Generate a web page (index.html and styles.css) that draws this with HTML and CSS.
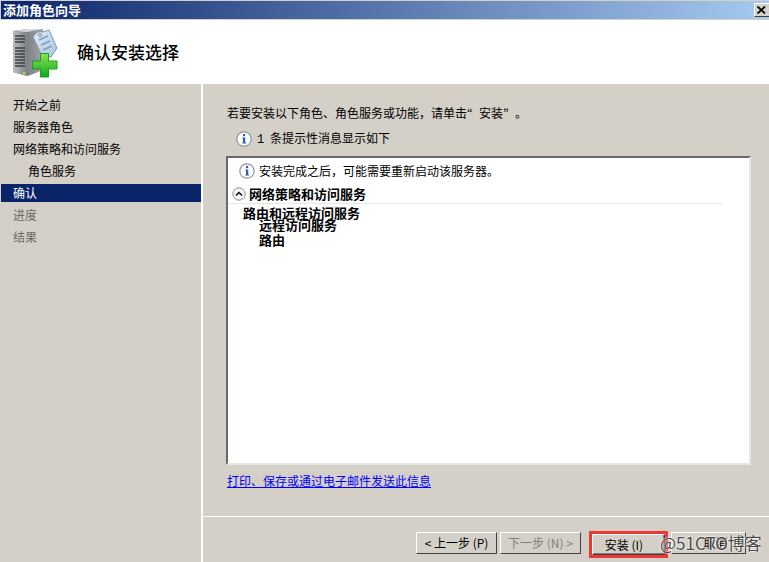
FILE: index.html
```html
<!DOCTYPE html>
<html lang="zh">
<head>
<meta charset="utf-8">
<title>添加角色向导</title>
<link rel="stylesheet" href="styles.css">
</head>
<body>
<div class="window">
  <div class="titlebar">
    <span class="title">添加角色向导</span>
    <span class="close"><svg width="9" height="8" viewBox="0 0 9 8"><path d="M0.5 0.5 L8 7.5 M8 0.5 L0.5 7.5" stroke="#000" stroke-width="1.8" fill="none"/></svg></span>
  </div>
  <header class="header">
    <svg class="logo" width="46" height="50" viewBox="0 0 46 50">
      <defs>
        <linearGradient id="srv" x1="0" x2="1" y1="0" y2="0"><stop offset="0" stop-color="#b9bec3"/><stop offset="1" stop-color="#7d8286"/></linearGradient>
        <linearGradient id="side" x1="0" x2="1" y1="0" y2="0"><stop offset="0" stop-color="#5e6266"/><stop offset="1" stop-color="#a2a5a8"/></linearGradient>
        <linearGradient id="tag" x1="0" x2="1" y1="0" y2="1"><stop offset="0" stop-color="#e3eef8"/><stop offset="1" stop-color="#a9c4e0"/></linearGradient>
        <linearGradient id="plus" x1="0" x2="0" y1="0" y2="1"><stop offset="0" stop-color="#8ae653"/><stop offset="1" stop-color="#12a61c"/></linearGradient>
      </defs>
      <path d="M0 3 L15 1 L30 1 L30 42 L15 48 L0 44 Z" fill="url(#side)"/>
      <path d="M0 3 L14 4 L14 48 L0 44 Z" fill="url(#srv)"/>
      <path d="M0 3 L15 1 L30 1 L14 4 Z" fill="#d6d9dc"/>
      <path d="M2 8 H12 M2 11 H12 M2 14 H12 M2 20 H12 M2 23 H12 M2 26 H12 M2 29 H12 M2 32 H12 M2 35 H12 M2 38 H12" stroke="#3e4246" stroke-width="1.3"/>
      <rect x="10" y="44" width="2.4" height="2.4" fill="#a6e23e"/>
      <path d="M20 9 Q24 2 30 4 L36 2 L44 20 L38 29 L29 28 Z" fill="url(#tag)" stroke="#7c98b6"/>
      <path d="M26 12 L35 8 M28 17 L37 13 M30 22 L39 18" stroke="#7e9cc0" stroke-width="1.4"/>
      <circle cx="27" cy="7" r="1.5" fill="#fff" stroke="#6a7f96"/>
      <path d="M27.5 25.5 H35.5 V33 H44 V41 H35.5 V49 H27.5 V41 H19.5 V33 H27.5 Z" fill="url(#plus)" stroke="#1f9a24"/>
    </svg>
    <h1 class="heading">确认安装选择</h1>
  </header>
  <div class="body">
    <nav class="nav">
      <div class="nav-item">开始之前</div>
      <div class="nav-item">服务器角色</div>
      <div class="nav-item">网络策略和访问服务</div>
      <div class="nav-item nav-sub">角色服务</div>
      <div class="nav-item nav-active">确认</div>
      <div class="nav-item nav-off">进度</div>
      <div class="nav-item nav-off">结果</div>
    </nav>
    <main class="main">
      <div class="content">
        <p class="intro">若要安装以下角色、角色服务或功能，请单击<span class="quote">“</span>安装<span class="quote">”</span>。</p>
        <div class="notice">
          <svg class="info" width="16" height="16" viewBox="0 0 16 16"><use href="#info-icon"/></svg>
          <span><span class="num">1</span> 条提示性消息显示如下</span>
        </div>
        <section class="panel">
          <div class="panel-msg">
            <svg class="info" width="16" height="16" viewBox="0 0 16 16">
              <g id="info-icon">
                <circle cx="8" cy="8" r="7.2" fill="#fff" stroke="#8d949c" stroke-width="1.2"/>
                <rect x="7" y="3" width="2.2" height="2.2" fill="#2b5fb4"/>
                <path d="M6.3 6.6 H9.2 V11.6 H10 V12.6 H6.3 V11.6 H7 V7.6 H6.3 Z" fill="#2b5fb4"/>
              </g>
            </svg>
            <span>安装完成之后，可能需要重新启动该服务器。</span>
          </div>
          <div class="group-head">
            <svg class="chev" width="14" height="14" viewBox="0 0 14 14"><circle cx="7" cy="7" r="6.2" fill="#f4f4f4" stroke="#8a8f94"/><path d="M4 8.5 L7 5.5 L10 8.5" stroke="#000" stroke-width="1.4" fill="none"/></svg>
            <span>网络策略和访问服务</span>
          </div>
          <div class="tree">
            <div class="tree-1">路由和远程访问服务</div>
            <div class="tree-2">远程访问服务</div>
            <div class="tree-3">路由</div>
          </div>
        </section>
        <a class="link" href="#">打印、保存或通过电子邮件发送此信息</a>
      </div>
      <footer class="footer">
        <button class="btn">&lt; 上一步 (P)</button>
        <button class="btn btn-off">下一步 (N) &gt;</button>
        <button class="btn btn-primary">安装 (I)</button>
        <button class="btn btn-cancel">取消</button>
      </footer>
    </main>
  </div>
</div>
<div class="watermark">@51CTO博客</div>
</body>
</html>
```
FILE: styles.css
```css
* { box-sizing: border-box; }
html, body { margin: 0; padding: 0; }
body {
  width: 769px;
  height: 562px;
  overflow: hidden;
  background: #d4d0c8;
  font-family: "Noto Sans CJK SC", "Liberation Sans", sans-serif;
  font-size: 12px;
  line-height: 16px;
  color: #000;
  position: relative;
}
.window { display: flex; flex-direction: column; height: 562px; padding-top: 1px; padding-left: 1px; }
.titlebar {
  height: 18px;
  flex: none;
  display: flex;
  align-items: center;
  justify-content: space-between;
  background: linear-gradient(to right, #0a246a, #a6caf0);
  color: #fff;
  font-size: 13px;
  font-weight: 700;
  padding-left: 2px;
}
.close {
  width: 16px;
  height: 14px;
  margin-right: -1px;
  padding-left: 2px;
  display: flex;
  align-items: center;
  background: #d4d0c8;
  border-top: 1px solid #fff;
  border-left: 1px solid #fff;
  border-bottom: 1px solid #404040;
}
.header {
  height: 64px;
  flex: none;
  margin-top: 1px;
  margin-left: -1px;
  padding-left: 1px;
  background: #fff;
  display: flex;
  align-items: center;
}
.logo { margin: 2px 0 0 12px; }
.heading { margin: 0 0 0 18px; font-size: 17px; font-weight: 500; line-height: 20px; }
.body { flex: 1; display: flex; min-height: 0; }
.nav { width: 200px; flex: none; padding-top: 10px; }
.nav-item { height: 22px; line-height: 21px; padding-left: 12px; }
.nav-sub { padding-left: 27px; }
.nav-active { height: 18px; margin: 2px 0 2px; line-height: 17px; background: #0a246a; color: #fff; }
.nav-off { color: #6d6a62; }
.main { flex: 1; display: flex; flex-direction: column; border-left: 2px solid #fff; }
.content { flex: 1; padding: 21px 18px 0 23px; display: flex; flex-direction: column; border-bottom: 1px solid #fff; }
.intro { margin: 0 0 0 1px; height: 16px; }
.quote { font-family: "Noto Sans CJK JP", sans-serif; display: inline-block; width: 12px; }
.notice { display: flex; align-items: center; gap: 5px; margin: 9px 0 0 10px; height: 18px; }
.num { font-family: "Liberation Mono", monospace; margin-right: 3px; }
.panel {
  margin-top: 8px;
  height: 309px;
  background: #fff;
  border-top: 2px solid #696969;
  border-left: 2px solid #696969;
  border-right: 2px solid #e8e6e0;
  border-bottom: 2px solid #e8e6e0;
  padding-top: 4px;
}
.panel-msg { display: flex; align-items: center; gap: 4px; padding-left: 11px; height: 18px; }
.group-head {
  display: flex;
  align-items: center;
  gap: 3px;
  margin-top: 4px;
  margin-right: 26px;
  padding-left: 4px;
  height: 20px;
  font-size: 13px;
  font-weight: 700;
  border-bottom: 1px solid #dfe8f3;
}
.tree { padding-top: 1px; font-size: 13px; font-weight: 700; }
.tree-1 { padding-left: 15px; height: 12px; line-height: 16px; }
.tree-2 { padding-left: 31px; height: 15px; line-height: 16px; }
.tree-3 { padding-left: 31px; height: 16px; line-height: 16px; }
.link { margin: 8px 0 0 1px; color: #0000ff; text-decoration: underline; height: 16px; width: max-content; }
.footer {
  height: 45px;
  flex: none;
  display: flex;
  align-items: flex-start;
  padding: 15px 0 0 213px;
  gap: 3px;
}
.btn {
  width: 81px;
  height: 22px;
  padding: 0;
  font: inherit;
  font-size: 12px;
  line-height: 18px;
  background: #d4d0c8;
  color: #000;
  border-top: 1px solid #fff;
  border-left: 1px solid #fff;
  border-right: 1px solid #404040;
  border-bottom: 1px solid #404040;
}
.btn-off { color: #857f76; }
.btn-primary {
  width: 73px;
  margin-left: 8px;
  margin-top: 2px;
  height: 21px;
  padding-right: 9px;
  box-shadow: inset -1px -1px 0 #808080, 0 0 0 3px #f03535;
}
.btn-cancel { width: 75px; margin-left: 3px; padding-left: 14px; }
.watermark {
  position: absolute;
  left: 660px;
  top: 533px;
  font-size: 17px;
  line-height: 20px;
  color: #4a4a4a;
  text-shadow: 0 0 2px #fff, 0 0 2px #fff;
}
```
